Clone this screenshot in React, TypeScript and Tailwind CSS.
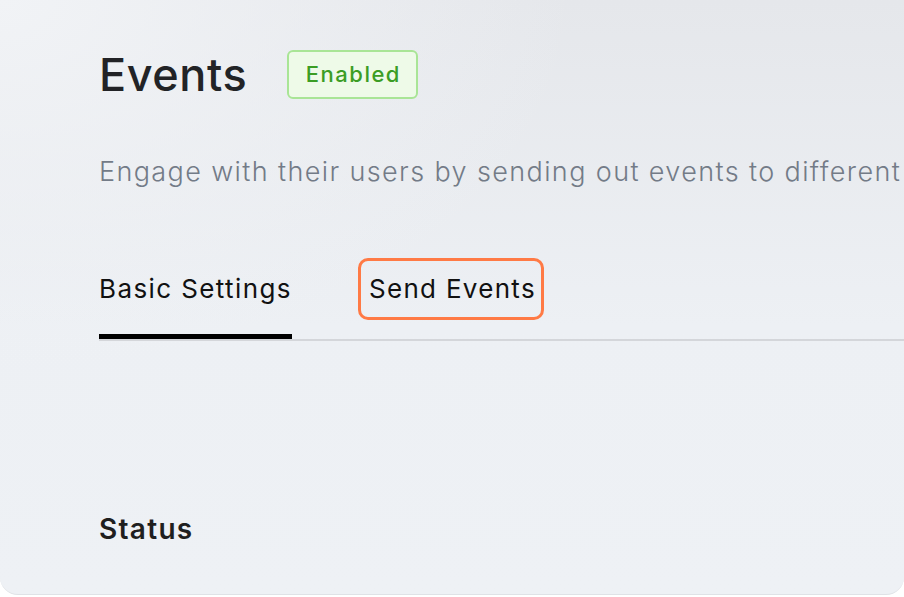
export default function App() {
  return (
    <div className="min-h-[597px] bg-white font-['Inter',sans-serif]">
      <div className="h-[595px] overflow-hidden rounded-b-[18px] border-b border-[#dfe2e6] bg-[radial-gradient(ellipse_at_top_left,#f1f3f6_0%,transparent_45%),linear-gradient(to_bottom,#e5e7eb,#edf0f4_55%,#eef1f5)] pl-[99px] pt-[50px]">
        {/* Title */}
        <div className="flex h-[49px] items-center gap-[40px]">
          <h1 className="text-[45px] font-medium leading-[49px] tracking-[0.6px] text-[#222326]">Events</h1>
          <span className="flex h-[49px] w-[131px] items-center justify-center rounded-[6px] border-2 border-[#a9e596] bg-[#eefae8] pl-[1px] text-[22px] font-medium tracking-[1.5px] text-[#3b9d24]">
            Enabled
          </span>
        </div>

        <p className="mt-[55px] whitespace-nowrap text-[27px] font-light leading-[36px] tracking-[1.38px] text-[#737b87]">
          Engage with their users by sending out events to different
        </p>

        {/* Tabs */}
        <div className="mt-[68px] flex items-start border-b-2 border-[#d4d6da]">
          <button className="border-b-[5px] border-black pb-[27px] pt-[13px] text-[26px] leading-[36px] tracking-[1.4px] text-[#111]">
            Basic Settings
          </button>
          <button className="ml-[66px] flex h-[62px] items-center rounded-[10px] border-[3px] border-[#ff7a45] pl-[8px] pr-[5px] text-[26px] leading-[36px] tracking-[1.3px] text-[#111]">
            Send Events
          </button>
        </div>

        <h2 className="mt-[170px] text-[28px] font-semibold leading-[36px] tracking-[1.3px] text-[#1f1f1f]">Status</h2>
      </div>
    </div>
  )
}
